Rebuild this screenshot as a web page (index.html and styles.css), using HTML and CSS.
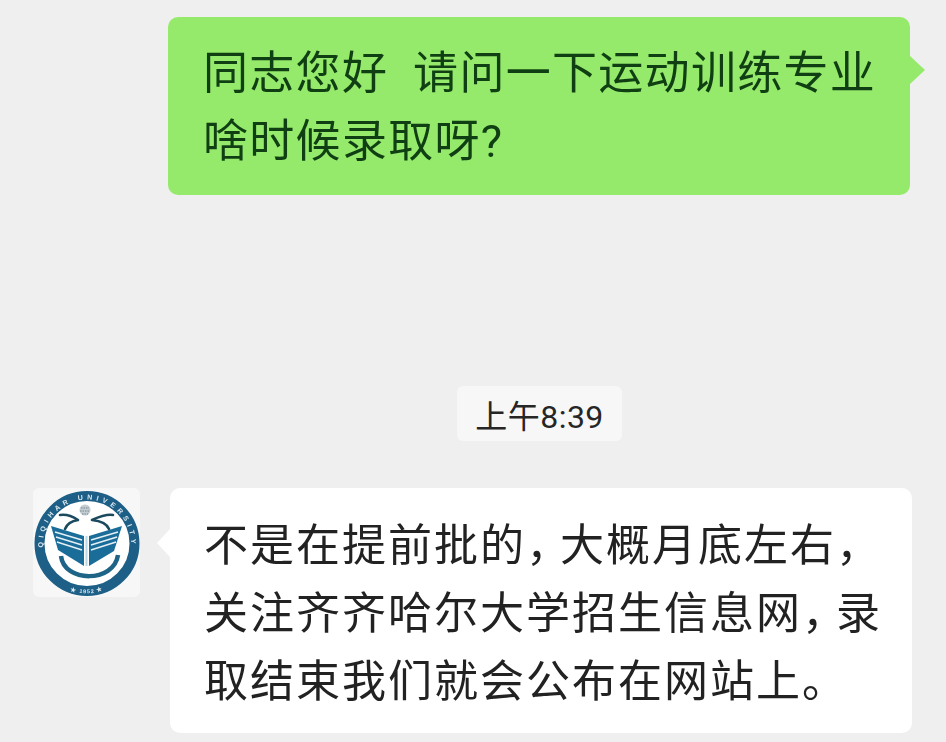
FILE: index.html
```html
<!DOCTYPE html>
<html lang="zh-CN">
<head>
<meta charset="utf-8">
<title>聊天记录</title>
<link rel="stylesheet" href="styles.css">
</head>
<body>
<main class="chat">
  <div class="row row-out">
    <div class="bubble bubble-out">同志您好&nbsp;&nbsp;请问一下运动训练专业<br>啥时候录取呀?</div>
  </div>
  <div class="time-row"><span class="time">上午8:39</span></div>
  <div class="row row-in">
    <div class="avatar">
      <svg class="logo" viewBox="0 0 107 109" aria-label="齐齐哈尔大学校徽">
        <defs>
          <path id="arc-top" d="M11.400 66.500A44 44 0 1 1 96.600 66.500"/>
          <path id="arc-bottom" d="M19 91A50 50 0 0 0 89 91"/>
        </defs>
        <circle cx="54" cy="55.500" r="47.500" class="ring"/>
        <text class="ring-text"><textPath href="#arc-top" startOffset="50%" text-anchor="middle">QIQIHAR UNIVERSITY</textPath></text>
        <text class="ring-text small"><textPath href="#arc-bottom" startOffset="50%" text-anchor="middle">★ 1952 ★</textPath></text>
        <circle cx="52" cy="22" r="5.500" class="seal"/>
        <path class="seal-mark" d="M48 20H56M47 23H57M49 26H55"/>
        <path class="bird" d="M27 27C33 26 39 28 45 32C38 33 34 36 32 41"/>
        <path class="bird" d="M80 27C74 26 68 28 59 32C69 33 74 36 76 41"/>
        <path class="arc" d="M28 68C31 95 81 95 85 67"/>
        <path class="wing" d="M18 38L51 48V78L25 62Z"/>
        <path class="wing" d="M89 38L56 48V78L81 63Z"/>
        <path class="spine" d="M53.500 48V78"/>
        <path class="stripe" d="M22 44L49 52M23 49L49 57M24 54L49 62M58 52L85 44M58 57L84 49M58 62L83 54"/>
      </svg>
    </div>
    <div class="bubble bubble-in">不是在提前批的<span class="comma">，</span>大概月底左右<span class="comma">，</span><br>关注齐齐哈尔大学招生信息网<span class="comma">，</span>录<br>取结束我们就会公布在网站上。</div>
  </div>
</main>
</body>
</html>
```

FILE: styles.css
```css
* {
  box-sizing: border-box;
}

html,
body {
  margin: 0;
  height: 100%;
}

body {
  background: #efefef;
  overflow: hidden;
  font-family: Roboto, "Noto Sans CJK SC", "Noto Sans", sans-serif;
}

.chat {
  display: flex;
  flex-direction: column;
  padding-top: 17px;
}

.row {
  display: flex;
}

.row-out {
  justify-content: flex-end;
  padding-right: 36px;
}

.row-in {
  align-items: flex-start;
  gap: 30px;
  margin-top: 47px;
  padding-left: 33px;
}

.bubble {
  position: relative;
  width: 742px;
  border-radius: 10px;
  font-size: 44px;
  letter-spacing: 2px;
  line-height: 68px;
  white-space: nowrap;
  filter: blur(0.35px);
}

.bubble::after {
  content: "";
  position: absolute;
  width: 0;
  height: 0;
  border-style: solid;
}

.bubble-out {
  height: 178px;
  padding: 23px 0 0 35px;
  background: #95ea6c;
  color: #0f3f12;
  font-size: 45px;
  letter-spacing: 1.3px;
}

.bubble-out::after {
  top: 39px;
  left: 100%;
  border-width: 14px 0 14px 15px;
  border-color: transparent transparent transparent #95ea6c;
}

.bubble-in {
  height: 245px;
  padding: 24px 0 0 34px;
  background: #ffffff;
  color: #222222;
}

.bubble-in::after {
  top: 41px;
  right: 100%;
  border-width: 14px 13px 14px 0;
  border-color: transparent #ffffff transparent transparent;
}

.comma {
  letter-spacing: -10px;
}

.time-row {
  display: flex;
  margin-top: 191px;
  padding-left: 457px;
}

.time {
  display: flex;
  align-items: center;
  justify-content: center;
  width: 165px;
  height: 55px;
  border-radius: 6px;
  background: #f7f7f7;
  color: #262626;
  font-size: 32px;
  letter-spacing: 0.5px;
}

.avatar {
  flex: none;
  width: 107px;
  height: 109px;
  border-radius: 6px;
  background: #f7f7f7;
}

.logo {
  display: block;
  width: 100%;
  height: 100%;
  filter: blur(0.6px);
}

.ring {
  fill: #ffffff;
  stroke: #1d5f86;
  stroke-width: 10px;
}

.ring-text {
  fill: #dce9f1;
  font-family: "Liberation Sans", sans-serif;
  font-size: 7px;
  font-weight: 700;
  letter-spacing: 4px;
}

.ring-text.small {
  font-size: 5.500px;
  letter-spacing: 0.800px;
}

.seal {
  fill: #c3ccd2;
}

.seal-mark {
  fill: none;
  stroke: #77858f;
  stroke-width: 1px;
  stroke-dasharray: 1.500 1;
}

.bird {
  fill: none;
  stroke: #1b4a5f;
  stroke-width: 2.600px;
  stroke-linecap: round;
  stroke-linejoin: round;
}

.arc {
  fill: none;
  stroke: #1d6487;
  stroke-width: 4.500px;
}

.wing {
  fill: #1b6d99;
}

.spine {
  fill: none;
  stroke: #b7d6e6;
  stroke-width: 2px;
}

.stripe {
  fill: none;
  stroke: #e4f0f6;
  stroke-width: 1.500px;
}
```
